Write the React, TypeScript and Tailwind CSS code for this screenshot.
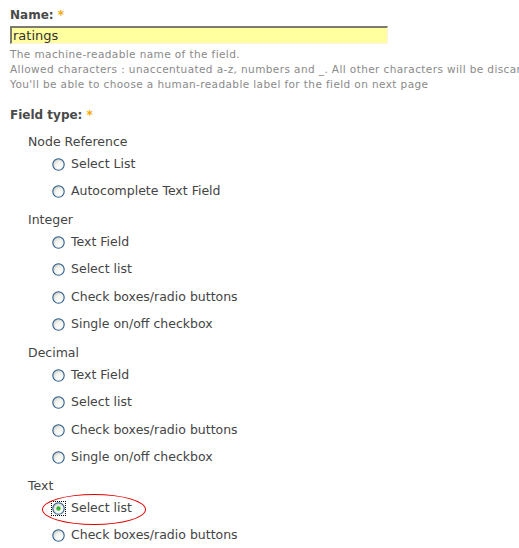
import React from "react";

const FONT = { fontFamily: '"DejaVu Sans", Verdana, sans-serif' };

type Group = { label: string; options: string[] };

const GROUPS: Group[] = [
  { label: "Node Reference", options: ["Select List", "Autocomplete Text Field"] },
  {
    label: "Integer",
    options: ["Text Field", "Select list", "Check boxes/radio buttons", "Single on/off checkbox"],
  },
  {
    label: "Decimal",
    options: ["Text Field", "Select list", "Check boxes/radio buttons", "Single on/off checkbox"],
  },
  { label: "Text", options: ["Select list", "Check boxes/radio buttons"] },
];

function Radio({ checked }: { checked?: boolean }) {
  return (
    <svg width="13" height="13" viewBox="0 0 13 13" className="shrink-0">
      <defs>
        <radialGradient id="rg" cx="0.65" cy="0.7" r="0.7">
          <stop offset="0" stopColor="#ffffff" />
          <stop offset="0.6" stopColor="#f2f2ee" />
          <stop offset="1" stopColor="#d4d4cc" />
        </radialGradient>
      </defs>
      <circle cx="6.5" cy="6.5" r="5.7" fill="url(#rg)" stroke="#2d5d8c" strokeWidth="1.1" />
      {checked && <circle cx="6.5" cy="6.5" r="2.2" fill="#2fb52f" />}
    </svg>
  );
}

function Option({ text, checked }: { text: string; checked?: boolean }) {
  return (
    <div className="relative flex h-[27.5px] items-center pl-[52px]">
      <span className={checked ? "outline-1 outline-dotted outline-black leading-none" : "leading-none"}>
        <Radio checked={checked} />
      </span>
      <span className="ml-[6px] text-[12.5px] text-[#444]">{text}</span>
      {checked && (
        <span className="pointer-events-none absolute left-[42px] top-[-1px] h-[31px] w-[104px] rounded-[50%] border border-[#e00000]" />
      )}
    </div>
  );
}

export default function App() {
  return (
    <div className="h-[548px] w-[519px] overflow-hidden bg-white" style={FONT}>
      <div className="pl-[10px] pt-[6px]">
        <div className="h-[18px] text-[12px] font-bold leading-[18px] text-[#494949]">
          Name: <span className="text-[#f6a800]">*</span>
        </div>
        <div className="mt-[2px] flex h-[18px] w-[378px] items-center border-t-2 border-l-2 border-r border-b border-t-[#7c7c6c] border-l-[#7c7c6c] border-r-[#fbf3e3] border-b-[#fbf3e3] bg-[#ffff9f] px-[1px] text-[13px] text-[#333]">
          ratings
        </div>
        <div className="mt-[2.5px] whitespace-nowrap text-[10.5px] leading-[15px] tracking-[0.4px] text-[#8a8a8a]">
          <div>The machine-readable name of the field.</div>
          <div>Allowed characters : unaccentuated a-z, numbers and _. All other characters will be discarded.</div>
          <div>You'll be able to choose a human-readable label for the field on next page</div>
        </div>
        <div className="mt-[14px] h-[18px] text-[12px] font-bold leading-[18px] text-[#494949]">
          Field type: <span className="text-[#f6a800]">*</span>
        </div>
      </div>
      <div className="mt-[8px]">
        {GROUPS.map((g, gi) => (
          <div key={g.label} className="mt-[4px]">
            <div className="h-[19px] pl-[28px] text-[12.5px] leading-[19px] text-[#444]">{g.label}</div>
            {g.options.map((o, oi) => (
              <Option key={o + oi} text={o} checked={gi === 3 && oi === 0} />
            ))}
          </div>
        ))}
      </div>
    </div>
  );
}
